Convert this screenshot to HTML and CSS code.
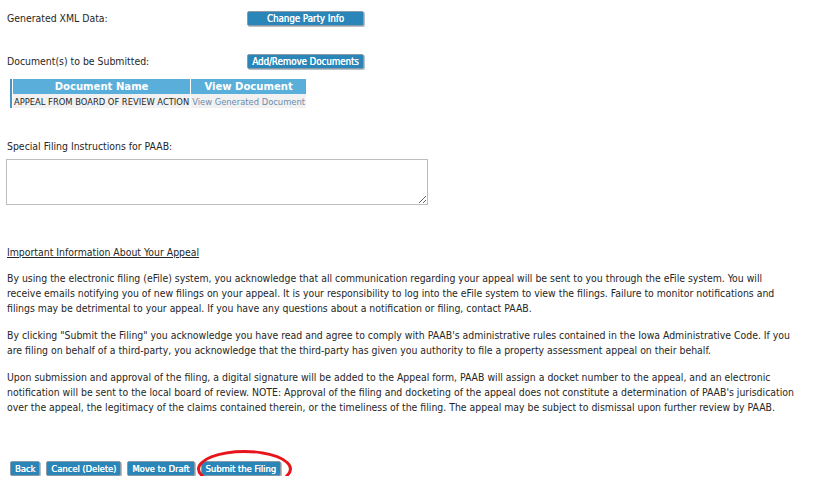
FILE: index.html
```html
<!DOCTYPE html>
<html lang="en">
<head>
    <meta charset="UTF-8">
    <title>eFile - Review Filing</title>
    <link rel="stylesheet" href="styles.css">
</head>
<body>
    <div class="page">
        <div class="field-row first">
            <span class="field-label">Generated XML Data:</span>
            <button class="btn wide">Change Party Info</button>
        </div>

        <div class="field-row second">
            <span class="field-label">Document(s) to be Submitted:</span>
            <button class="btn wide">Add/Remove Documents</button>
        </div>

        <table class="docs">
            <tr>
                <th class="col-name">Document Name</th>
                <th class="col-view">View Document</th>
            </tr>
            <tr>
                <td>APPEAL FROM BOARD OF REVIEW ACTION</td>
                <td><a href="#">View Generated Document</a></td>
            </tr>
        </table>

        <p class="instr-label">Special Filing Instructions for PAAB:</p>
        <textarea class="instr"></textarea>

        <h4 class="info-title">Important Information About Your Appeal</h4>

        <div class="info">
            <p>By using the electronic filing (eFile) system, you acknowledge that all communication regarding your appeal will be sent to you through the eFile system. You will<br>
            receive emails notifying you of new filings on your appeal. It is your responsibility to log into the eFile system to view the filings. Failure to monitor notifications and<br>
            filings may be detrimental to your appeal. If you have any questions about a notification or filing, contact PAAB.</p>
            <p>By clicking "Submit the Filing" you acknowledge you have read and agree to comply with PAAB's administrative rules contained in the Iowa Administrative Code. If you<br>
            are filing on behalf of a third-party, you acknowledge that the third-party has given you authority to file a property assessment appeal on their behalf.</p>
            <p>Upon submission and approval of the filing, a digital signature will be added to the Appeal form, PAAB will assign a docket number to the appeal, and an electronic<br>
            notification will be sent to the local board of review. NOTE: Approval of the filing and docketing of the appeal does not constitute a determination of PAAB's jurisdication<br>
            over the appeal, the legitimacy of the claims contained therein, or the timeliness of the filing. The appeal may be subject to dismissal upon further review by PAAB.</p>
        </div>

        <div class="actions">
            <button class="btn">Back</button>
            <button class="btn">Cancel (Delete)</button>
            <button class="btn">Move to Draft</button>
            <span class="marked">
                <button class="btn">Submit the Filing</button>
            </span>
        </div>
    </div>
</body>
</html>
```

FILE: styles.css
```css
body {
    margin: 0;
    padding: 0;
    background: #fff;
    color: #262626;
    font-family: "DejaVu Sans Condensed", "DejaVu Sans", sans-serif;
    font-size: 10.4px;
}
.page {
    width: 820px;
    padding: 0 0 0 7px;
}
.field-row {
    display: flex;
    align-items: center;
    height: 16px;
}
.field-row.first {
    margin-top: 10px;
}
.field-row.second {
    margin-top: 27px;
}
.field-label {
    width: 240px;
}
.btn {
    font-family: inherit;
    font-size: 9.3px;
    font-weight: normal;
    color: #fff;
    text-shadow: 0.3px 0 0 #fff;
    background: #2a85b8;
    border: 1px solid #8a9aa6;
    border-radius: 2px;
    box-shadow: 1px 1px 0 #b9c1c7;
    padding: 0 4px;
    height: 15px;
    line-height: 13px;
    white-space: nowrap;
    cursor: pointer;
}
.btn.wide {
    width: 117px;
    padding: 0;
    font-size: 9.6px;
}
.docs {
    margin: 10px 0 0 3px;
    border-collapse: separate;
    border-spacing: 1px 0;
    border-left: 2px solid #4a93c4;
    table-layout: fixed;
}
.docs th {
    background: #5aafda;
    color: #fff;
    font-size: 11.2px;
    font-weight: bold;
    height: 15px;
    padding: 0;
}
.docs .col-name {
    width: 177px;
}
.docs .col-view {
    width: 108px;
}
.docs td {
    background: #f1f1f1;
    height: 14px;
    padding: 0 1px;
    font-size: 9.3px;
    white-space: nowrap;
    overflow: hidden;
}
.docs a {
    color: #6b8cad;
    text-decoration: none;
}
.instr-label {
    margin: 32px 0 7px 0;
}
.instr {
    display: block;
    width: 422px;
    height: 46px;
    box-sizing: border-box;
    margin-left: -1px;
    border: 1px solid #bdbdbd;
    resize: vertical;
}
.info-title {
    margin: 41px 0 0 0;
    font-size: 10.4px;
    font-weight: normal;
    text-decoration: underline;
}
.info p {
    margin: 13px 0 0 0;
    line-height: 15px;
    white-space: nowrap;
}
.info p + p {
    margin-top: 12px;
}
.actions {
    margin-top: 46px;
    display: flex;
    gap: 6px;
    padding-left: 3px;
}
.marked {
    position: relative;
    display: flex;
}
.marked::after {
    content: "";
    position: absolute;
    left: -4px;
    top: -11px;
    width: 89px;
    height: 32px;
    border: 3px solid #e8141c;
    border-radius: 50%;
}
```
